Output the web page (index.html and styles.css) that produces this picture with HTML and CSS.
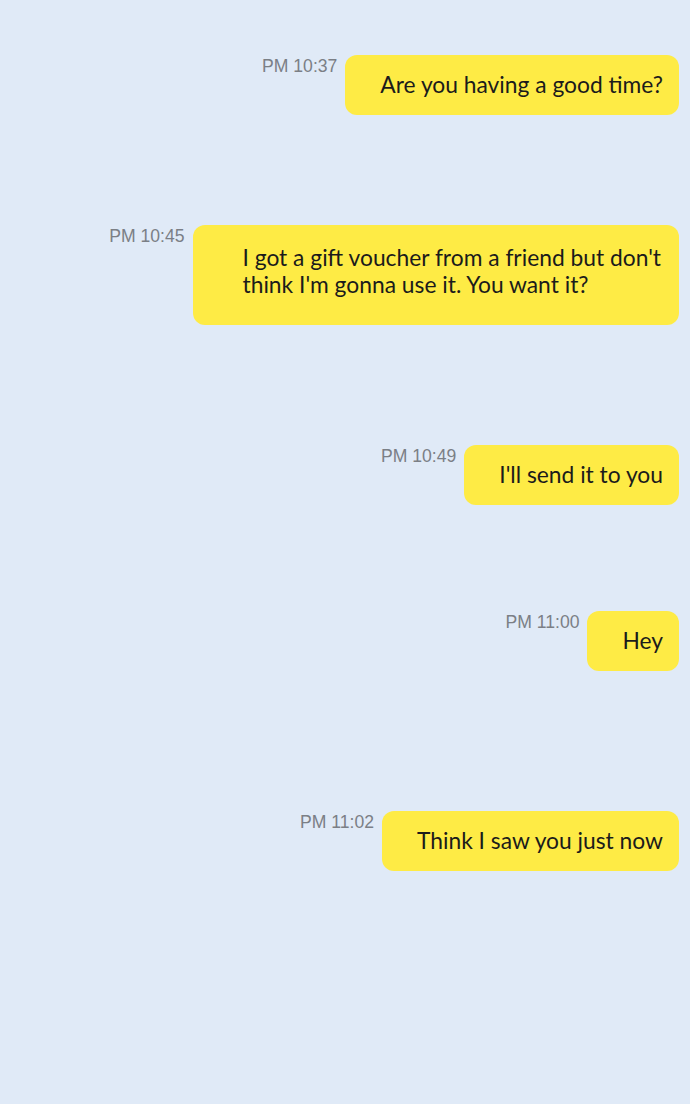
FILE: index.html
```html
<!DOCTYPE html>
<html lang="en">
<head>
<meta charset="utf-8">
<link rel="stylesheet" href="styles.css">
</head>
<body>
<main class="chat">
  <div class="row row-1">
    <span class="time">PM 10:37</span>
    <div class="bubble">Are you having a good time?</div>
  </div>
  <div class="row row-2">
    <span class="time">PM 10:45</span>
    <div class="bubble bubble-wide">I got a gift voucher from a friend but don't<br>think I'm gonna use it. You want it?</div>
  </div>
  <div class="row row-3">
    <span class="time">PM 10:49</span>
    <div class="bubble">I'll send it to you</div>
  </div>
  <div class="row row-4">
    <span class="time">PM 11:00</span>
    <div class="bubble">Hey</div>
  </div>
  <div class="row row-5">
    <span class="time">PM 11:02</span>
    <div class="bubble">Think I saw you just now</div>
  </div>
</main>
</body>
</html>
```
FILE: styles.css
```css
html, body {
  margin: 0;
  padding: 0;
}
body {
  background: #e0eaf7;
  width: 690px;
  height: 1104px;
  overflow: hidden;
}
.chat {
  display: flex;
  flex-direction: column;
  align-items: flex-end;
  padding: 0 11px 0 0;
}
.row {
  display: flex;
  align-items: flex-start;
  gap: 8px;
}
.row-1 { margin-top: 55px; }
.row-2 { margin-top: 110px; }
.row-3 { margin-top: 120px; }
.row-4 { margin-top: 106px; }
.row-5 { margin-top: 140px; }
.time {
  font-family: "Liberation Sans", Arial, sans-serif;
  font-size: 17.6px;
  color: #7b7f86;
  margin-top: 1px;
}
.bubble {
  background: #feeb45;
  border-radius: 12px;
  font-family: Lato, "Noto Sans", sans-serif;
  font-size: 22.8px;
  color: #1b1b1b;
  line-height: 27px;
  padding: 16px 16px 17px 35px;
  text-align: right;
}
.bubble-wide {
  text-align: left;
  padding: 19px 18px 27px 50px;
}
```
